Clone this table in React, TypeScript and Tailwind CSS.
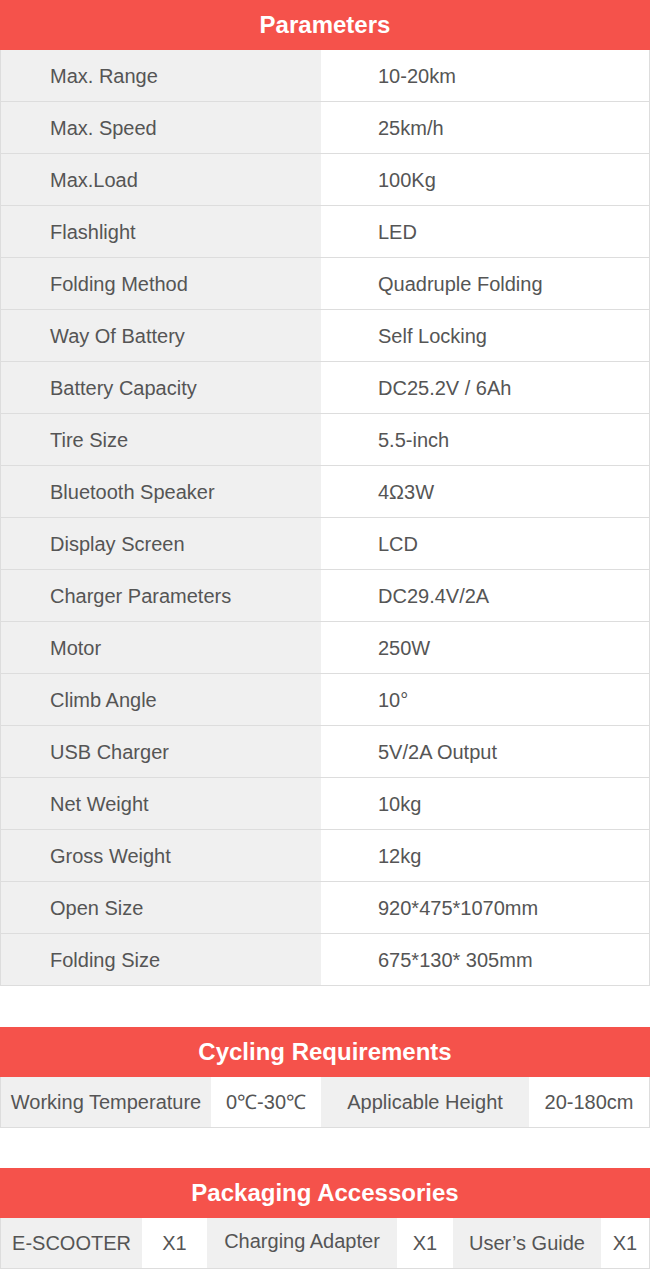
const params: [string, string][] = [
  ["Max. Range", "10-20km"],
  ["Max. Speed", "25km/h"],
  ["Max.Load", "100Kg"],
  ["Flashlight", "LED"],
  ["Folding Method", "Quadruple Folding"],
  ["Way Of Battery", "Self Locking"],
  ["Battery Capacity", "DC25.2V / 6Ah"],
  ["Tire Size", "5.5-inch"],
  ["Bluetooth Speaker", "4Ω3W"],
  ["Display Screen", "LCD"],
  ["Charger Parameters", "DC29.4V/2A"],
  ["Motor", "250W"],
  ["Climb Angle", "10°"],
  ["USB Charger", "5V/2A Output"],
  ["Net Weight", "10kg"],
  ["Gross Weight", "12kg"],
  ["Open Size", "920*475*1070mm"],
  ["Folding Size", "675*130* 305mm"],
];

function Header({ title }: { title: string }) {
  return (
    <div className="h-[50px] bg-[#f5524b] flex items-center justify-center text-white text-[24px] font-bold">
      {title}
    </div>
  );
}

export default function App() {
  return (
    <div
      className="w-[650px] bg-white text-[#555] text-[20px]"
      style={{ fontFamily: '"Liberation Sans", Arial, sans-serif' }}
    >
      {/* Parameters */}
      <Header title="Parameters" />
      <div className="border-x border-[#ddd]">
        {params.map(([k, v]) => (
          <div key={k} className="grid grid-cols-[320px_1fr] h-[52px] border-b border-[#ddd]">
            <div className="bg-[#f0f0f0] flex items-center pl-[49px]">{k}</div>
            <div className="bg-white flex items-center pl-[57px]">{v}</div>
          </div>
        ))}
      </div>

      {/* Cycling Requirements */}
      <div className="mt-[41px]">
        <Header title="Cycling Requirements" />
        <div className="grid grid-cols-[210px_110px_208px_1fr] h-[51px] border-x border-b border-[#ddd]">
          <div className="bg-[#f0f0f0] flex items-center justify-center">Working Temperature</div>
          <div className="bg-white flex items-center justify-center">0℃-30℃</div>
          <div className="bg-[#f0f0f0] flex items-center justify-center">Applicable Height</div>
          <div className="bg-white flex items-center justify-center">20-180cm</div>
        </div>
      </div>

      {/* Packaging Accessories */}
      <div className="mt-[40px]">
        <Header title="Packaging Accessories" />
        <div className="grid grid-cols-[141px_65px_190px_56px_148px_1fr] h-[51px] border-x border-b border-[#ddd]">
          <div className="bg-[#f0f0f0] flex items-center justify-center">E-SCOOTER</div>
          <div className="bg-white flex items-center justify-center">X1</div>
          <div className="bg-[#f0f0f0] flex items-center justify-center pb-1">Charging Adapter</div>
          <div className="bg-white flex items-center justify-center">X1</div>
          <div className="bg-[#f0f0f0] flex items-center justify-center">User’s Guide</div>
          <div className="bg-white flex items-center justify-center">X1</div>
        </div>
      </div>
    </div>
  );
}
